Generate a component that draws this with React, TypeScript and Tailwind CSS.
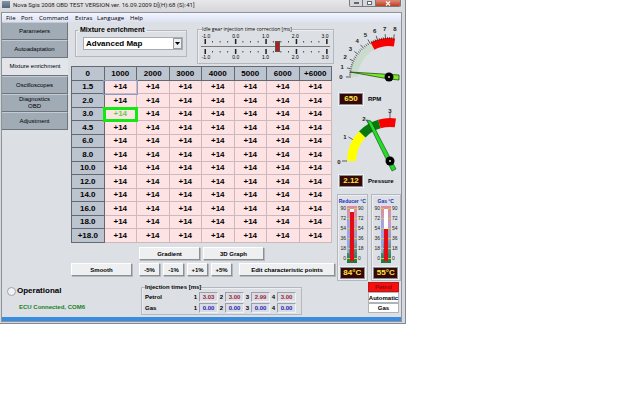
import React from "react";

const TABS = ["Parameters", "Autoadaptation", "Mixture enrichment", "Oscilloscopes", "Diagnostics OBD", "Adjustment"];
const RPM = ["1000", "2000", "3000", "4000", "5000", "6000", "+6000"];
const TIMES = ["1.5", "2.0", "3.0", "4.5", "6.0", "8.0", "10.0", "12.0", "14.0", "16.0", "18.0", "+18.0"];
const SCALE = ["-1.0", "0.0", "1.0", "2.0", "3.0"];

const BUTTON =
  "flex h-[13px] items-center justify-center border border-t-white border-l-white border-r-[#8d8f93] border-b-[#8d8f93] bg-[#eeeff1] text-[6px] leading-none font-bold whitespace-nowrap shadow-[1px_1px_0_#b4b7bc]";
const GROUP = "border border-[#b4b8be] shadow-[inset_1px_1px_0_#eceef1]";
const DISPLAY =
  "border border-[#8b8d90] bg-[#350808] text-center text-[8px] leading-[10px] font-bold text-[#ffe63c] outline outline-[#eef0f2]";

function polar(cx: number, cy: number, r: number, deg: number) {
  const a = (deg * Math.PI) / 180;
  return [cx + r * Math.cos(a), cy - r * Math.sin(a)];
}

function band(cx: number, cy: number, ro: number, ri: number, from: number, to: number) {
  const [a, b] = polar(cx, cy, ro, from);
  const [c, d] = polar(cx, cy, ro, to);
  const [e, f] = polar(cx, cy, ri, to);
  const [g, h] = polar(cx, cy, ri, from);
  return `M${a} ${b}A${ro} ${ro} 0 0 1 ${c} ${d}L${e} ${f}A${ri} ${ri} 0 0 0 ${g} ${h}Z`;
}

function ticks(cx: number, cy: number, r: number, start: number, end: number, count: number, every: number) {
  return Array.from({ length: count + 1 }, (_, i) => {
    const deg = start + ((end - start) * i) / count;
    const [x1, y1] = polar(cx, cy, r, deg);
    const [x2, y2] = polar(cx, cy, r + (i % every === 0 ? 5 : 2), deg);
    return <line key={i} x1={x1} y1={y1} x2={x2} y2={y2} stroke="#222" strokeWidth="0.7" />;
  });
}

function RpmGauge() {
  return (
    <svg viewBox="0 0 66 68" className="block h-[68px] w-[66px]" role="img" aria-label="RPM gauge">
      <path d={band(53, 55, 38, 31, 180, 118)} fill="#c9dccb" />
      <path d={band(53, 55, 39, 31, 118, 81)} fill="#f90000" />
      {ticks(53, 55, 38, 180, 83, 32, 4)}
      {Array.from({ length: 9 }, (_, i) => {
        const [x, y] = polar(53, 55, 48, 180 - (i * 97) / 8);
        return (
          <text key={i} x={x} y={y + 2} textAnchor="middle" fontSize="6" fontWeight="bold" fill="#222">
            {i}
          </text>
        );
      })}
      <path d="M14 50L63 53V58L53 57Z" fill="#79ee24" stroke="#123c08" strokeWidth="0.7" />
      <circle cx="53" cy="55" r="4.5" />
      <circle cx="53" cy="55" r="1" fill="#ddd" />
    </svg>
  );
}

function PressureGauge() {
  const labels = [
    [3, 56],
    [9, 31],
    [28, 13],
    [54, 5],
  ];
  return (
    <svg viewBox="0 0 66 67" className="block h-[67px] w-[66px]" role="img" aria-label="Pressure gauge">
      <path d={band(54, 54, 43, 34, 180, 136)} fill="#ffff00" />
      <path d={band(54, 54, 43, 34, 136, 106)} fill="#087a0d" />
      <path d={band(54, 54, 43, 34, 106, 82)} fill="#f90000" />
      {ticks(54, 54, 43, 180, 90, 3, 1)}
      {labels.map(([x, y], i) => (
        <text key={i} x={x} y={y + 1} textAnchor="middle" fontSize="6" fontWeight="bold" fill="#222">
          {i}
        </text>
      ))}
      <path d="M31 13L35 14L60 62L56 64L52 56Z" fill="#25dc29" stroke="#0a4c0c" strokeWidth="0.6" />
      <circle cx="54" cy="54" r="4.5" />
      <circle cx="54" cy="54" r="1" fill="#ddd" />
    </svg>
  );
}

function Thermometer({ id, name, value, top }: { id: string; name: string; value: string; top: number }) {
  return (
    <section className={`flex h-[87px] min-w-0 flex-1 flex-col items-center ${GROUP}`}>
      <h3 className="mt-[3px] text-[5px] leading-[7px] font-bold whitespace-nowrap text-[#1b2fb8]">{name}</h3>
      <svg viewBox="0 0 28 60" className="block h-[60px] w-[28px]" role="img" aria-label={name}>
        <defs>
          <linearGradient id={id} x1="0" y1="0" x2="0" y2="1">
            <stop offset="0" stopColor="#e08a98" />
            <stop offset="0.3" stopColor="#c99cc0" />
            <stop offset="0.6" stopColor="#8f9cc4" />
            <stop offset="1" stopColor="#167a3a" />
          </linearGradient>
        </defs>
        <rect x="9" y="1" width="10" height="57" fill={`url(#${id})`} />
        <rect x="9" y="12" width="2" height="36" fill="#9aa4ee" />
        <rect x="12" y="4" width="4" height="52" fill="#fff" />
        <rect x="12" y={top} width="4" height={56 - top} fill="#e30c16" />
        {[90, 72, 54, 36, 18, 0].map((n, i) => (
          <g key={n} fontSize="5" fill="#222">
            <path d={`M9 ${3.5 + i * 10}h3M16 ${3.5 + i * 10}h3`} stroke="#d8c83a" strokeWidth="1" />
            <text x="8" y={5 + i * 10} textAnchor="end">{n}</text>
            <text x="20" y={5 + i * 10}>{n}</text>
          </g>
        ))}
      </svg>
      <output className={`mt-[2px] w-[25px] ${DISPLAY}`}>{value}</output>
    </section>
  );
}

function ScaleTicks() {
  return (
    <svg viewBox="0 0 128 5" className="block h-[5px] w-full" aria-hidden="true">
      {Array.from({ length: 17 }, (_, i) => (
        <rect key={i} x={i * 7.6 + 3} y={i % 4 ? 2 : 0} width={i % 4 ? 0.8 : 1.5} height={i % 4 ? 1.5 : 5} fill="#222" />
      ))}
    </svg>
  );
}

function ScaleLabels() {
  return (
    <div className="flex justify-between text-[5px] leading-[6px]">
      {SCALE.map((s) => (
        <span key={s} className="w-[10px] text-center">{s}</span>
      ))}
    </div>
  );
}

function Times({ label, values, color }: { label: string; values: string[]; color: string }) {
  return (
    <div className="flex h-[11px] items-center">
      <span className="w-[50px] pl-[3px]">{label}</span>
      {values.map((v, i) => (
        <label key={i} className="flex w-[26px] items-center justify-end gap-[2px]">
          {i + 1}
          <input
            readOnly
            defaultValue={v}
            className={`h-[10px] w-[19px] border border-t-[#9da1a7] border-r-[#f1f2f4] border-b-[#f1f2f4] border-l-[#9da1a7] bg-[#d9dce4] text-center text-[6px] ${color}`}
          />
        </label>
      ))}
    </div>
  );
}

function TitleBar() {
  return (
    <header className="flex h-[12px] items-start bg-linear-to-b from-[#e7e6e9] to-[#d6d5d9] pl-[2px]">
      <span className="mt-[1px] h-[7px] w-[8px] bg-linear-to-b from-[#8394a8] to-[#52677d]" />
      <h1 className="ml-[3px] flex-1 font-['Roboto',sans-serif] text-[6px] leading-[9px] whitespace-nowrap text-[#222]">
        Nova Sgis 2008 OBD TEST VERSION ver. 16.09.2009 D[(H):68 (S):41]
      </h1>
      <div className="mr-[1px] flex h-[7px] overflow-hidden rounded-b-[2px] border border-t-0 border-[#77797f] text-[#333]">
        <button aria-label="Minimize" className="flex w-[13px] items-center justify-center border-r border-[#77797f] bg-[#d5d7dc]">
          <span className="h-[2px] w-[5px] border border-[#666] bg-white" />
        </button>
        <button aria-label="Maximize" className="flex w-[13px] items-center justify-center border-r border-[#77797f] bg-[#d5d7dc]">
          <span className="h-[4px] w-[5px] border border-[#666] bg-white" />
        </button>
        <button aria-label="Close" className="flex w-[24px] items-center justify-center bg-linear-to-b from-[#dc8b78] to-[#bf3b20]">
          <svg viewBox="0 0 6 5" className="h-[5px] w-[6px]">
            <path d="M1 .5l4 4M5 .5l-4 4" stroke="#fff" strokeWidth="1.3" />
          </svg>
        </button>
      </div>
    </header>
  );
}

function cellClass(row: number, col: number) {
  if (row === 2 && col === 0) return "text-[#62cf4f] outline-3 -outline-offset-2 outline-[#12e812]";
  if (row === 0 && col === 0) return "outline outline-[#8d9cc4]";
  return "";
}

export default function App() {
  return (
    <div className="min-h-screen bg-white font-['Liberation_Sans',Arial,sans-serif] text-black">
      <div className="w-full max-w-[406px] border-r border-b border-[#85888d] bg-[#d7d8dc] pr-[3px] pb-px">
        <TitleBar />
        <div className="ml-px border border-[#8d939b] bg-[#dcdfe4]">
          <nav className="flex h-[9px] items-center bg-linear-to-b from-[#f3f5fc] to-[#dce1f4] pl-[4px] font-['Open_Sans',sans-serif] text-[6px] leading-none">
            <button className="w-[15px] text-left">File</button>
            <button className="w-[18px] text-left">Port</button>
            <button className="w-[36px] text-left">Command</button>
            <button className="w-[22px] text-left">Extras</button>
            <button className="w-[33px] text-left">Language</button>
            <button className="text-left">Help</button>
          </nav>

          <div className="flex">
            <aside className="flex w-[66px] shrink-0 flex-col">
              {TABS.map((t) => (
                <button
                  key={t}
                  className={`flex h-[18px] items-center justify-center border-b border-[#6f747b] text-center text-[6px] leading-[7px] ${
                    t === "Mixture enrichment"
                      ? "bg-[#e2e5ea] whitespace-nowrap"
                      : "border-t border-r border-t-[#c5cbd2] border-r-[#6f747b] bg-[#a1abb6] px-[14px]"
                  }`}
                >
                  {t}
                </button>
              ))}
              <div className="mt-auto pb-[4px] pl-[5px]">
                <label className="flex items-center gap-[1px] text-[8px] leading-[10px] font-bold">
                  <input type="radio" className="size-[9px] appearance-none rounded-full border border-[#a0a3a8] bg-[#f1f2f4]" />
                  Operational
                </label>
                <p className="mt-[7px] pl-[12px] text-[6px] leading-[8px] font-bold whitespace-nowrap text-[#178224]">
                  ECU Connected, COM6
                </p>
              </div>
            </aside>

            <main className="min-w-0 flex-1 pl-[3px]">
              <div className="flex h-[43px] items-start justify-between pt-[4px] pr-[2px] pl-[4px]">
                <fieldset className={`h-[31px] w-[112px] px-[7px] ${GROUP}`}>
                  <legend className="-ml-[5px] px-[2px] text-[7px] leading-[8px] font-bold">
                    <label htmlFor="map">Mixture enrichment</label>
                  </legend>
                  <div className="relative mt-[3px] mr-[-4px]">
                    <select
                      id="map"
                      className="block h-[13px] w-full appearance-none border border-[#a8acb2] bg-white pl-[2px] text-[8px] leading-[10px] font-bold"
                    >
                      <option>Advanced Map</option>
                    </select>
                    <span className="pointer-events-none absolute top-[1px] right-[1px] flex h-[11px] w-[9px] items-center justify-center border border-[#9a9da2] bg-[#eceef0]">
                      <svg viewBox="0 0 5 3" className="h-[3px] w-[5px]">
                        <path d="M0 0h5L2.500 3z" />
                      </svg>
                    </span>
                  </div>
                </fieldset>
                <fieldset className={`h-[38px] w-[137px] px-[3px] ${GROUP}`}>
                  <legend className="ml-[1px] font-['Open_Sans',sans-serif] text-[5px] leading-[7px] whitespace-nowrap">
                    <label htmlFor="idle">Idle gear injection time correction [ms]</label>
                  </legend>
                  <ScaleLabels />
                  <ScaleTicks />
                  <input
                    id="idle"
                    type="range"
                    min="-1"
                    max="3"
                    step="0.1"
                    defaultValue="1.4"
                    className="relative my-[-3px] block h-[11px] w-full appearance-none bg-[linear-gradient(transparent_5px,#777_5px,#777_6px,transparent_6px)] [&::-webkit-slider-thumb]:h-[11px] [&::-webkit-slider-thumb]:w-[5px] [&::-webkit-slider-thumb]:appearance-none [&::-webkit-slider-thumb]:border [&::-webkit-slider-thumb]:border-[#555] [&::-webkit-slider-thumb]:bg-[#b51d1d]"
                  />
                  <ScaleTicks />
                  <ScaleLabels />
                </fieldset>
              </div>

              <table className="mt-[1px] w-[261px] table-fixed border-collapse text-center text-[8px] leading-none font-bold">
                <thead>
                  <tr className="h-[14px] bg-[#bcc4cf]">
                    {["0", ...RPM].map((h) => (
                      <th key={h} className="border border-[#64686f] p-0">{h}</th>
                    ))}
                  </tr>
                </thead>
                <tbody>
                  {TIMES.map((t, r) => (
                    <tr key={t} className={r % 2 ? "h-[14px]" : "h-[13px]"}>
                      <th className="border border-[#64686f] bg-[#bcc4cf] p-0">{t}</th>
                      {RPM.map((c, i) => (
                        <td key={c} className={`border border-[#cdb9bc] bg-[#fde3e3] p-0 ${cellClass(r, i)}`}>+14</td>
                      ))}
                    </tr>
                  ))}
                </tbody>
              </table>

              <div className="mt-[4px] flex gap-[3px] pl-[68px]">
                <button className={`w-[61px] ${BUTTON}`}>Gradient</button>
                <button className={`w-[61px] ${BUTTON}`}>3D Graph</button>
              </div>
              <div className="mt-[3px] flex gap-[3px]">
                <button className={`mr-[4px] w-[61px] ${BUTTON}`}>Smooth</button>
                {["-5%", "-1%", "+1%", "+5%"].map((p) => (
                  <button key={p} className={`w-[21px] ${BUTTON}`}>{p}</button>
                ))}
                <button className={`ml-[4px] w-[96px] ${BUTTON}`}>Edit characteristic points</button>
              </div>

              <fieldset className={`mt-[7px] ml-[70px] h-[32px] w-[161px] text-[6px] leading-none font-bold ${GROUP}`}>
                <legend className="ml-[3px] leading-[8px]">Injection times [ms]</legend>
                <Times label="Petrol" values={["3.03", "3.00", "2.99", "3.00"]} color="text-[#9d2632]" />
                <Times label="Gas" values={["0.00", "0.00", "0.00", "0.00"]} color="text-[#2424b4]" />
              </fieldset>
            </main>

            <aside className="flex w-[65px] shrink-0 flex-col">
              <RpmGauge />
              <div className="mt-[3px] flex items-center gap-[5px] pl-[3px] text-[6px] font-bold">
                <output className={`w-[24px] ${DISPLAY}`}>650</output>
                RPM
              </div>
              <div className="mt-[2px]">
                <PressureGauge />
              </div>
              <div className="mt-px flex items-center gap-[5px] pl-[3px] text-[6px] font-bold">
                <output className={`w-[24px] ${DISPLAY}`}>2.12</output>
                Pressure
              </div>
              <div className="mt-[7px] flex gap-[3px] pl-px">
                <Thermometer id="reducer" name="Reducer °C" value="84°C" top={7} />
                <Thermometer id="gas" name="Gas °C" value="55°C" top={24} />
              </div>
              <div className="mt-px mr-[2px] ml-auto flex w-[31px] flex-col text-[6px] leading-none font-bold">
                <button className="h-[10px] border border-[#b51a1a] bg-[#fb0d0d] text-[#8c0b0b]">Petrol</button>
                <button className="flex h-[11px] items-center justify-center border border-[#b0b3b8] bg-white">Automatic</button>
                <button className="h-[10px] border border-[#b0b3b8] bg-white">Gas</button>
              </div>
            </aside>
          </div>
          <div className="mt-[2px] h-[4px] bg-[#388de0]" />
        </div>
      </div>
    </div>
  );
}
